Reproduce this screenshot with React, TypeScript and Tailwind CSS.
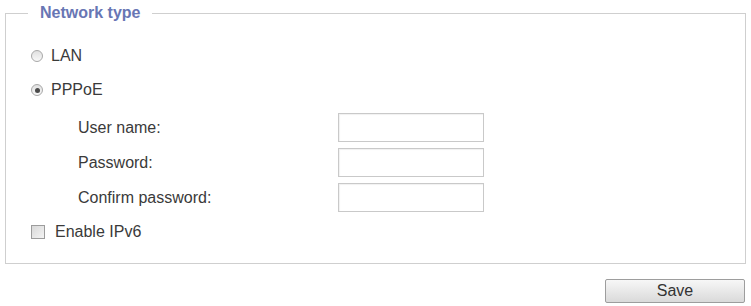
import React from 'react';

function Radio({ checked }: { checked?: boolean }) {
  return (
    <span className="flex h-[12px] w-[12px] items-center justify-center rounded-full border border-[#a8a8a8] bg-gradient-to-b from-[#e0e0e0] to-[#f8f8f8]">
      {checked && <span className="h-[5px] w-[5px] rounded-full bg-[#4a4a4a]" />}
    </span>
  );
}

function Field({ label, type = 'text' }: { label: string; type?: string }) {
  return (
    <div className="flex h-[35px] items-center">
      <span className="ml-[47px] w-[260px]">{label}</span>
      <input
        type={type}
        className="h-[29px] w-[146px] border border-[#c9c9c9] bg-white outline-none shadow-[inset_1px_1px_1px_rgba(0,0,0,0.06)]"
      />
    </div>
  );
}

export default function App() {
  return (
    <div className="min-h-[306px] w-[751px] bg-white text-[16px] text-[#3a3a3a] [font-family:'Liberation_Sans',Arial,sans-serif]">
      <div className="pl-[5px] pr-[5px] pt-[5px]">
        <fieldset className="m-0 h-[259px] border border-[#cfcfcf] p-0">
          <legend className="ml-[22px] px-[12px] text-[16px] font-bold leading-[16px] text-[#6876b4]">
            Network type
          </legend>
          <div className="pl-[25px] pt-[18px]">
            <div className="flex h-[34px] items-center gap-[8px]">
              <Radio />
              <span>LAN</span>
            </div>
            <div className="flex h-[34px] items-center gap-[8px]">
              <Radio checked />
              <span>PPPoE</span>
            </div>
            <div className="mt-[3px]">
              <Field label="User name:" />
              <Field label="Password:" type="password" />
              <Field label="Confirm password:" type="password" />
            </div>
            <div className="flex h-[34px] items-center gap-[10px]">
              <span className="h-[14px] w-[14px] border border-[#9c9c9c] bg-gradient-to-br from-[#d8d8d8] to-[#f4f4f4]" />
              <span>Enable IPv6</span>
            </div>
          </div>
        </fieldset>
      </div>
      <div className="flex justify-end pr-[6px] pt-[15px]">
        <button className="h-[24px] w-[140px] rounded-[2px] border border-[#9d9d9d] bg-gradient-to-b from-[#f7f7f7] to-[#dadada] text-[16px] leading-[22px] text-[#333]">
          Save
        </button>
      </div>
    </div>
  );
}
